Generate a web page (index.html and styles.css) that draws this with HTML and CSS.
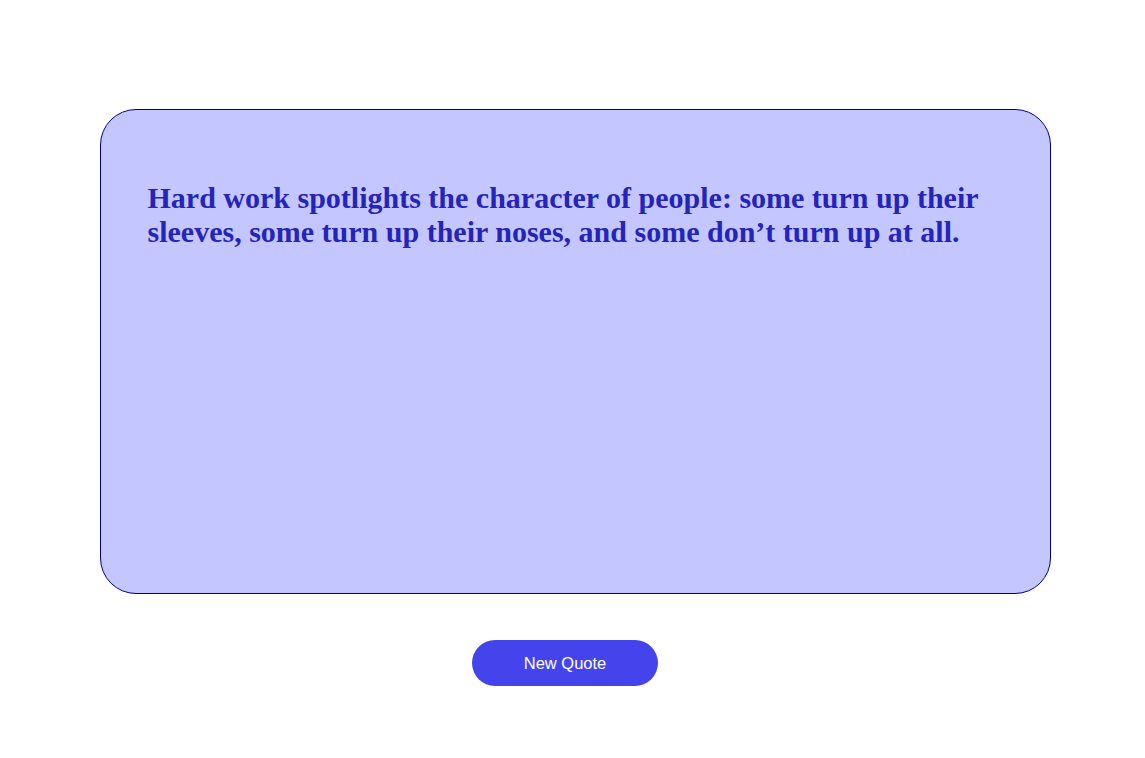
FILE: index.html
```html
<!DOCTYPE html>
<html>
<head>
<meta charset="utf-8">
<link rel="stylesheet" href="styles.css">
</head>
<body>
<main class="page">
  <section class="card">
    <p class="quote">Hard work spotlights the character of people: some turn up their sleeves, some turn up their noses, and some don’t turn up at all.</p>
  </section>
  <button class="btn">New Quote</button>
</main>
</body>
</html>
```
FILE: styles.css
```css
html, body {
  margin: 0;
  padding: 0;
  background: #ffffff;
}
.page {
  display: flex;
  flex-direction: column;
  align-items: center;
  padding-top: 109px;
}
.card {
  box-sizing: border-box;
  width: 951px;
  height: 485px;
  margin-left: 5px;
  background: #c4c6ff;
  border: 1px solid #00008b;
  border-radius: 36px;
  padding: 71px 47px 0 47px;
}
.quote {
  margin: 0;
  font-family: "Liberation Serif", "Times New Roman", serif;
  font-weight: bold;
  font-size: 30px;
  line-height: 34px;
  color: #2424bc;
}
.btn {
  margin-top: 46px;
  margin-left: -15px;
  width: 186px;
  height: 46px;
  border: none;
  border-radius: 23px;
  background: #4444ec;
  color: #ffffff;
  font-family: "Liberation Sans", Arial, sans-serif;
  font-size: 16.5px;
}
```
